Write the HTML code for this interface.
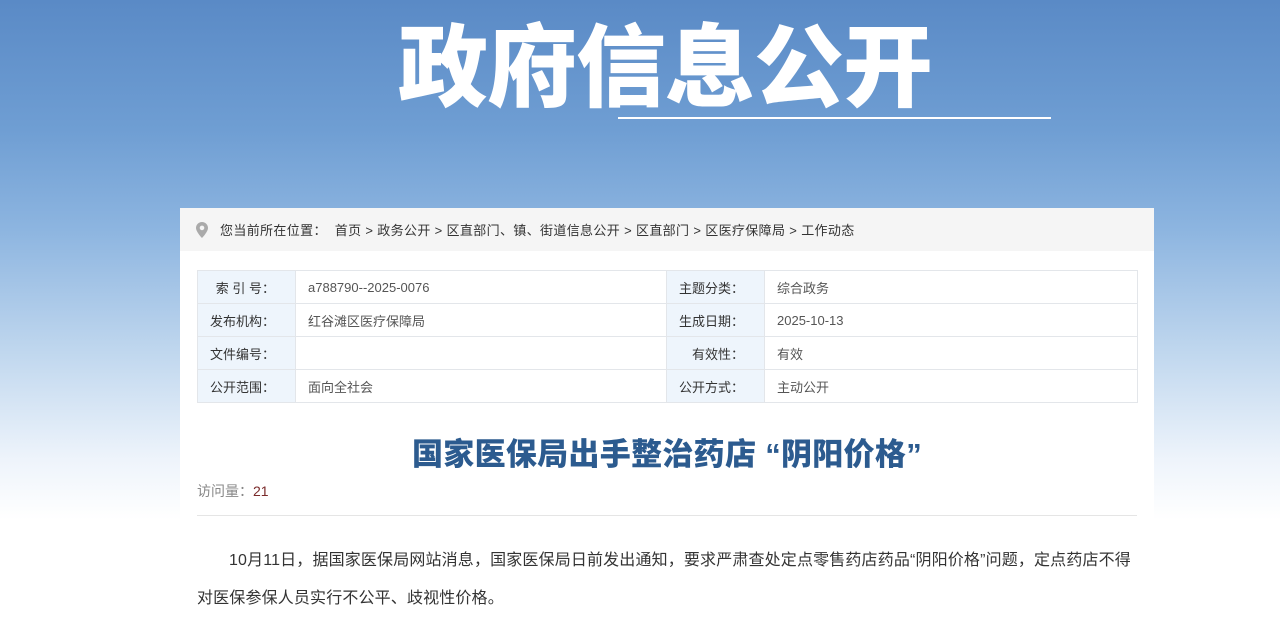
<!DOCTYPE html>
<html><head><meta charset="utf-8"><style>
*{margin:0;padding:0;box-sizing:border-box}
html{background:#fff;height:634px;overflow:hidden}
body{width:1280px;height:634px;overflow:hidden;font-family:"Liberation Sans","Noto Sans CJK SC",sans-serif;
background:linear-gradient(180deg,#5a8ac6 0px,#6f9ed3 130px,#8db5e0 230px,#c3d9ef 360px,#eef4fb 460px,#fff 520px) no-repeat;position:relative}
.t{position:absolute;left:398px;top:14px;font-size:90px;font-weight:900;color:#fff;letter-spacing:-1px;line-height:110px;white-space:nowrap}
.ln{position:absolute;left:618px;top:117px;width:433px;height:2px;background:#fff}
.panel{position:absolute;left:180px;top:208px;width:974px;height:426px;background:#fff;overflow:hidden}
.bc{height:43px;background:#f5f5f5;font-size:13px;color:#333;line-height:45px;padding-left:40px;position:relative;letter-spacing:0.35px;white-space:nowrap}
.bc svg{position:absolute;left:16px;top:14px}
table{position:absolute;left:17px;top:62px;width:940px;border-collapse:collapse;font-size:13px;color:#555;table-layout:fixed}
td{border:1px solid #e3e6ea;height:33px;padding:0 12px}
td.l{background:#eef5fc;text-align:right;color:#333;padding-right:20px}
h1{position:absolute;left:0;width:974px;top:221px;text-align:center;font-size:31px;color:#2c5b8f;font-weight:900;letter-spacing:0.3px}
.v{position:absolute;left:17px;top:273px;font-size:14px;color:#888}
.v b{color:#7a2a2a;font-weight:normal}
.hr{position:absolute;left:17px;top:307px;width:940px;height:1px;background:#e5e5e5}
p{position:absolute;left:17px;width:945px;font-size:16px;color:#333;line-height:38px;top:334px;text-indent:32px;letter-spacing:0.15px}
</style></head><body>
<div class="t">政府信息公开</div><div class="ln"></div>
<div class="panel">
<div class="bc"><svg width="12" height="16" viewBox="0 0 12 16"><path d="M6 0C2.7 0 0 2.6 0 5.9 0 10 6 16 6 16s6-6 6-10.1C12 2.6 9.3 0 6 0zm0 8.2A2.3 2.3 0 1 1 6 3.6a2.3 2.3 0 0 1 0 4.6z" fill="#aaa"/></svg>您当前所在位置：&nbsp; 首页 &gt; 政务公开 &gt; 区直部门、镇、街道信息公开 &gt; 区直部门 &gt; 区医疗保障局 &gt; 工作动态</div>
<table>
<colgroup><col style="width:98px"><col style="width:371px"><col style="width:98px"><col style="width:373px"></colgroup>
<tr><td class="l">索 引 号：</td><td>a788790--2025-0076</td><td class="l">主题分类：</td><td>综合政务</td></tr>
<tr><td class="l">发布机构：</td><td>红谷滩区医疗保障局</td><td class="l">生成日期：</td><td>2025-10-13</td></tr>
<tr><td class="l">文件编号：</td><td></td><td class="l">有效性：</td><td>有效</td></tr>
<tr><td class="l">公开范围：</td><td>面向全社会</td><td class="l">公开方式：</td><td>主动公开</td></tr>
</table>
<h1>国家医保局出手整治药店 “阴阳价格”</h1>
<div class="v">访问量：<b>21</b></div>
<div class="hr"></div>
<p>10月11日，据国家医保局网站消息，国家医保局日前发出通知，要求严肃查处定点零售药店药品“阴阳价格”问题，定点药店不得对医保参保人员实行不公平、歧视性价格。</p>
</div>
</body></html>
